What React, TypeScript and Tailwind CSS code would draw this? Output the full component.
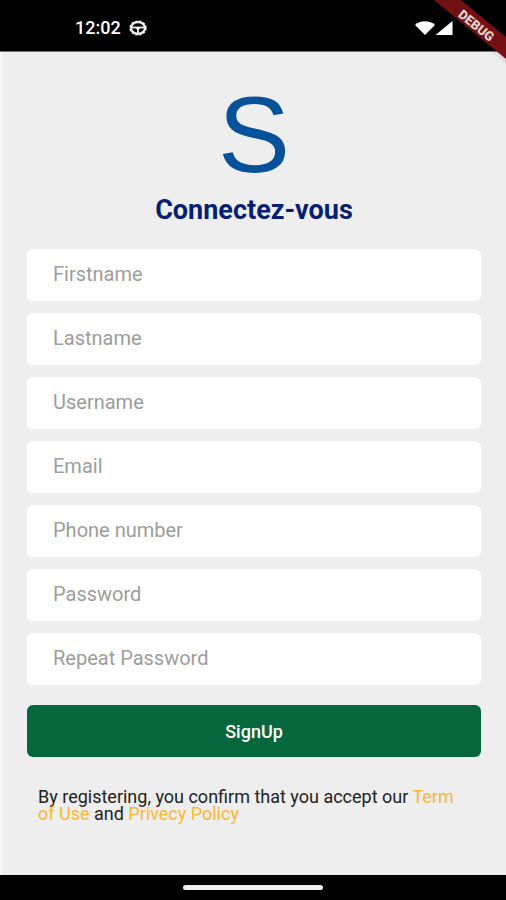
import React from "react";

const fields = [
  { id: "firstname", label: "Firstname", type: "text" },
  { id: "lastname", label: "Lastname", type: "text" },
  { id: "username", label: "Username", type: "text" },
  { id: "email", label: "Email", type: "email" },
  { id: "phone", label: "Phone number", type: "tel" },
  { id: "password", label: "Password", type: "password" },
  { id: "repeat-password", label: "Repeat Password", type: "password" },
];

function StatusBar() {
  return (
    <header className="relative flex h-[52px] shrink-0 items-center justify-between overflow-visible border-b border-[#777] bg-black pt-1 pr-[53px] pl-[75px] text-white">
      <div className="flex items-center gap-2">
        <span className="text-[18px] leading-5 font-medium">12:02</span>
        <svg className="h-4 w-[18px]" viewBox="0 0 18 16" fill="none" stroke="#eee" aria-hidden="true">
          <ellipse cx="9" cy="8" rx="7" ry="5.8" strokeWidth="2.2" />
          <ellipse cx="9" cy="8" rx="8" ry="6.9" strokeWidth="1.4" strokeDasharray="2.4 1.6" />
          <path d="M2 7.500H16" strokeWidth="1.800" />
          <path d="M6.500 7.500h5L9.900 10v4H8.100V10Z" fill="#eee" stroke="none" />
        </svg>
      </div>
      <svg className="h-[14px] w-[38px]" viewBox="0 0 38 14" fill="#fff" aria-hidden="true">
        <path d="M0 4C5-1 15-1 20 4L10 14Z" />
        <path d="M37.500 0v14H20.500Z" />
      </svg>
      <svg className="absolute top-0 right-0 h-[64px] w-[76px]" viewBox="0 0 76 64" aria-hidden="true">
        <path d="M4 0H31L76 41V62Z" transform="translate(0 2)" fill="#000" opacity=".06" />
        <path d="M4 0H31L76 37V59Z" fill="#721014" />
        <text
          x="46"
          y="30"
          transform="rotate(39 46 26)"
          textAnchor="middle"
          fill="#e4d5ce"
          fontFamily="Roboto, sans-serif"
          fontSize="13"
          fontWeight="900"
        >
          DEBUG
        </text>
      </svg>
    </header>
  );
}

export default function App() {
  return (
    <div className="flex min-h-screen flex-col bg-[#eeeeee] font-['Roboto',sans-serif]">
      <StatusBar />
      <main className="flex grow flex-col border-l-2 border-[#f8f8f8] pr-[25px] pl-[25px]">
        <div className="mt-[31px] h-[104px] text-center font-['Liberation_Sans',sans-serif] text-[108px] leading-[104px] text-[#05529b]">
          S
        </div>
        <h1 className="mt-[9px] text-center text-[27px] leading-7 font-bold text-[#061f73]">Connectez-vous</h1>
        <form className="mt-[25px] flex flex-col" onSubmit={(e) => e.preventDefault()}>
          <div className="flex flex-col gap-3">
            {fields.map((f) => (
              <label key={f.id} htmlFor={f.id} className="flex">
                <input
                  id={f.id}
                  type={f.type}
                  placeholder={f.label}
                  aria-label={f.label}
                  className="h-[52px] w-full rounded-md bg-white px-[26px] pb-[2px] text-[20px] text-black outline-none placeholder:text-[#9c9c9c]"
                />
              </label>
            ))}
          </div>
          <button type="submit" className="mt-5 h-[52px] rounded-md bg-[#05673b] text-[18px] font-medium text-white">
            SignUp
          </button>
        </form>
        <p className="mt-[31px] pr-[25px] pl-[11px] text-[18px] leading-[17px] text-[#222]">
          By registering, you confirm that you accept our{" "}
          <a href="#terms" className="text-[#fbb731]">
            Term of Use
          </a>{" "}
          and{" "}
          <a href="#privacy" className="text-[#fbb731]">
            Privecy Policy
          </a>
        </p>
      </main>
      <footer className="flex h-[25px] shrink-0 items-center justify-center bg-black">
        <div className="h-[5px] w-[140px] rounded-full bg-[#eee]" />
      </footer>
    </div>
  );
}
